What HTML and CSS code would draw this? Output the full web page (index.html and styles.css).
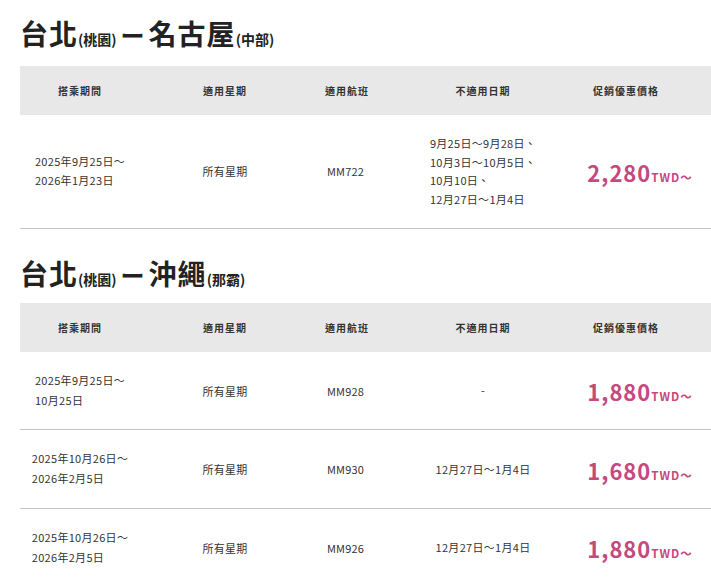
FILE: index.html
```html
<!DOCTYPE html>
<html lang="zh-Hant">
<head>
<meta charset="utf-8">
<title>促銷優惠價格</title>
<link rel="stylesheet" href="styles.css">
</head>
<body>
<section class="route route-first">
  <h2 class="route-title">台北<span class="sub">(桃園)</span><span class="dash">ー</span>名古屋<span class="sub">(中部)</span></h2>
  <div class="fare-table">
    <div class="row head">
      <div class="cell c1">搭乘期間</div>
      <div class="cell c2">適用星期</div>
      <div class="cell c3">適用航班</div>
      <div class="cell c4">不適用日期</div>
      <div class="cell c5">促銷優惠價格</div>
    </div>
    <div class="row body">
      <div class="cell c1"><span class="block">2025年9月25日～<br>2026年1月23日</span></div>
      <div class="cell c2">所有星期</div>
      <div class="cell c3">MM722</div>
      <div class="cell c4"><span class="block">9月25日～9月28日、<br>10月3日～10月5日、<br>10月10日、<br>12月27日～1月4日</span></div>
      <div class="cell c5 price-cell"><span class="price">2,280</span><span class="unit">TWD～</span></div>
    </div>
  </div>
</section>
<section class="route">
  <h2 class="route-title">台北<span class="sub">(桃園)</span><span class="dash">ー</span>沖繩<span class="sub">(那霸)</span></h2>
  <div class="fare-table">
    <div class="row head">
      <div class="cell c1">搭乘期間</div>
      <div class="cell c2">適用星期</div>
      <div class="cell c3">適用航班</div>
      <div class="cell c4">不適用日期</div>
      <div class="cell c5">促銷優惠價格</div>
    </div>
    <div class="row body">
      <div class="cell c1"><span class="block">2025年9月25日～<br>10月25日</span></div>
      <div class="cell c2">所有星期</div>
      <div class="cell c3">MM928</div>
      <div class="cell c4">-</div>
      <div class="cell c5 price-cell"><span class="price">1,880</span><span class="unit">TWD～</span></div>
    </div>
    <div class="row body">
      <div class="cell c1"><span class="block">2025年10月26日～<br>2026年2月5日</span></div>
      <div class="cell c2">所有星期</div>
      <div class="cell c3">MM930</div>
      <div class="cell c4">12月27日～1月4日</div>
      <div class="cell c5 price-cell"><span class="price">1,680</span><span class="unit">TWD～</span></div>
    </div>
    <div class="row body">
      <div class="cell c1"><span class="block">2025年10月26日～<br>2026年2月5日</span></div>
      <div class="cell c2">所有星期</div>
      <div class="cell c3">MM926</div>
      <div class="cell c4">12月27日～1月4日</div>
      <div class="cell c5 price-cell"><span class="price">1,880</span><span class="unit">TWD～</span></div>
    </div>
  </div>
</section>
</body>
</html>
```
FILE: styles.css
```css
html, body {
  margin: 0;
  background: #ffffff;
}
body {
  padding: 16px 0 0 20px;
  font-family: "Noto Sans CJK TC", "Noto Sans", sans-serif;
  color: #333333;
}
.route {
  margin-top: 27px;
}
.route-first {
  margin-top: 0;
}
.route-title {
  margin: 0 0 7px;
  font-size: 28px;
  line-height: 34px;
  font-weight: 700;
  color: #222222;
  letter-spacing: 1px;
}
.route-first .route-title {
  margin-bottom: 10px;
}
.sub {
  font-size: 14px;
  letter-spacing: 0;
}
.dash {
  font-size: 24px;
  margin: 0 4px 0 4px;
  letter-spacing: 0;
}
.row {
  display: grid;
  grid-template-columns: 132px 134px 129px 139px 1fr;
  align-items: center;
}
.head {
  height: 49px;
  background: #e8e8e8;
  font-size: 10px;
  font-weight: 700;
  letter-spacing: 1px;
}
.body {
  border-bottom: 1px solid #c4c4c4;
  font-size: 11px;
  letter-spacing: 0.3px;
}
.cell {
  text-align: center;
}
.body .cell {
  padding-top: 19px;
  padding-bottom: 19px;
}
.block {
  display: inline-block;
  text-align: left;
}
.c1 { padding-right: 12px; }
.c2 { padding-left: 12px; }
.c3 { padding-right: 7px; }
.c4 { padding-right: 3px; }
.c5 { padding-right: 13px; }
.body .c1 { line-height: 19.8px; }
.body .c3 { padding-right: 10px; letter-spacing: 0.2px; }
.body .c4 { line-height: 18.7px; }
.body .price-cell {
  padding-right: 0;
  padding-left: 15px;
  padding-top: 22px;
  padding-bottom: 16px;
  line-height: 30px;
}
.price {
  font-size: 22px;
  font-weight: 700;
  color: #c5487f;
  letter-spacing: 1px;
}
.unit {
  font-size: 11.5px;
  font-weight: 700;
  color: #c5487f;
  letter-spacing: 1px;
}
```
